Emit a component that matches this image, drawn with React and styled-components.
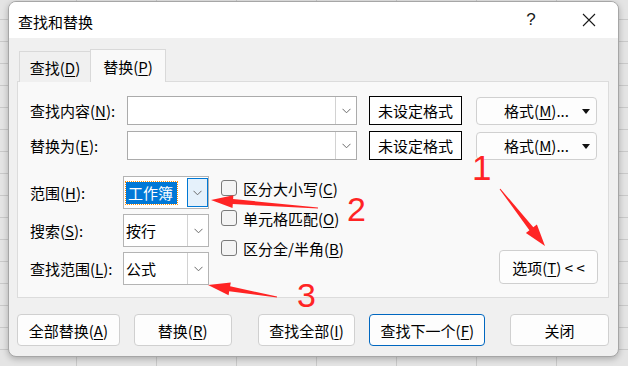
import React from "react";
import styled, { createGlobalStyle, css } from "styled-components";

const FONT = `"Noto Sans CJK SC", "Noto Sans", sans-serif`;

const GlobalStyle = createGlobalStyle`
  html, body { margin: 0; padding: 0; }
  body {
    width: 628px;
    height: 366px;
    overflow: hidden;
    font-family: ${FONT};
    background-color: #e4e4e4;
    background-image:
      repeating-linear-gradient(to bottom, transparent 0 19px, #c9c9c9 19px 20px, transparent 20px 22px),
      repeating-linear-gradient(to right, transparent 0 76px, #c9c9c9 76px 77px, transparent 77px 80px);
  }
  u { text-underline-offset: 2px; text-decoration-thickness: 1px; }
`;

const Page = styled.div`
  position: relative;
  width: 628px;
  height: 366px;
  padding: 1px 0 0 8px;
  box-sizing: border-box;
`;

const Dialog = styled.div`
  width: 611px;
  height: 356px;
  box-sizing: border-box;
  background: #f0f0f0;
  border: 1px solid #a6a6a6;
  border-radius: 8px;
  box-shadow: 0 2px 6px rgba(0, 0, 0, 0.25);
  overflow: hidden;
  display: flex;
  flex-direction: column;
  color: #000;
  font-size: 15px;
`;

const TitleBar = styled.div`
  height: 36px;
  flex: none;
  background: #ffffff;
  display: flex;
  align-items: center;
  padding-left: 9px;
`;

const Title = styled.div`
  font-size: 15px;
  line-height: 1;
  margin-top: 2px;
`;

const TitleButtons = styled.div`
  margin-left: auto;
  display: flex;
  gap: 12px;
  padding-right: 6px;
  height: 100%;
`;

const TitleButton = styled.div`
  width: 46px;
  height: 100%;
  display: flex;
  align-items: center;
  justify-content: center;
  font-family: "Liberation Sans", sans-serif;
  font-size: 17px;
  color: #1a1a1a;
`;

const Body = styled.div`
  flex: 1;
  display: flex;
  flex-direction: column;
  padding: 11px 9px 0 8px;
`;

const TabStrip = styled.div`
  height: 32px;
  display: flex;
  align-items: flex-end;
  padding-left: 2px;
`;

const Tab = styled.div`
  box-sizing: border-box;
  height: ${(p) => (p.$active ? 33 : 31)}px;
  width: ${(p) => p.$w}px;
  margin-bottom: -1px;
  border: 1px solid #d9d9d9;
  border-bottom: none;
  background: ${(p) => (p.$active ? "#f9f9f9" : "#f0f0f0")};
  display: flex;
  align-items: center;
  justify-content: center;
  font-size: 15px;
  line-height: 1;
  position: relative;
  z-index: ${(p) => (p.$active ? 1 : 0)};
  margin-left: ${(p) => (p.$active ? -1 : 0)}px;
`;

const Panel = styled.div`
  box-sizing: border-box;
  height: 217px;
  background: #f9f9f9;
  border: 1px solid #dcdcdc;
  padding: 14px 0 0 12px;
  display: flex;
  flex-direction: column;
`;

const FieldRows = styled.div`
  display: flex;
  flex-direction: column;
  gap: 6px;
`;

const FieldRow = styled.div`
  display: flex;
  align-items: center;
  height: 29px;
`;

const Label = styled.div`
  width: ${(p) => p.$w}px;
  flex: none;
  font-size: 15px;
  line-height: 1;
  white-space: nowrap;
`;

const TextCombo = styled.div`
  box-sizing: border-box;
  width: 230px;
  height: 29px;
  background: #fff;
  border: 1px solid #ababab;
  display: flex;
`;

const TextValue = styled.div`
  flex: 1;
`;

const DropPart = styled.div`
  box-sizing: border-box;
  width: ${(p) => p.$w || 21}px;
  display: flex;
  align-items: center;
  justify-content: center;
  border-left: 1px solid #d2d2d2;
  background: #fff;
  ${(p) =>
    p.$focused &&
    css`
      border: 1px solid #0078d4;
      background: #e5f1fb;
      margin: 1px 0;
    `}
`;

const FormatBox = styled.div`
  box-sizing: border-box;
  width: 93px;
  height: 29px;
  margin-left: 12px;
  border: 1px solid #000;
  background: #fff;
  display: flex;
  align-items: center;
  justify-content: center;
  font-size: 15px;
  line-height: 1;
`;

const FormatButton = styled.div`
  box-sizing: border-box;
  position: relative;
  width: 121px;
  height: 28px;
  margin-left: 14px;
  border: 1px solid #d0d0d0;
  border-radius: 4px;
  background: #fdfdfd;
  display: flex;
  align-items: center;
  justify-content: center;
  font-size: 15px;
  line-height: 1;
`;

const Caret = styled.span`
  position: absolute;
  right: 6px;
  top: 50%;
  margin-top: -2px;
  width: 0;
  height: 0;
  border-left: 4px solid transparent;
  border-right: 4px solid transparent;
  border-top: 5px solid #111;
`;

const Lower = styled.div`
  display: flex;
  margin-top: 16px;
`;

const OptionsGrid = styled.div`
  display: grid;
  grid-template-columns: 93px 86px;
  grid-auto-rows: 33px;
  row-gap: 5px;
  align-items: center;
`;

const Combo = styled.div`
  box-sizing: border-box;
  width: 86px;
  height: 33px;
  background: #fff;
  border: 1px solid #b4b4b4;
  display: flex;
`;

const ComboValue = styled.div`
  flex: 1;
  display: flex;
  align-items: center;
  padding-left: 2px;
  font-size: 15px;
  line-height: 1;
`;

const Selected = styled.span`
  display: flex;
  align-items: center;
  height: 22px;
  padding: 0 4px 0 2px;
  background: #0078d7;
  color: #fff;
  outline: 1px dotted #ff8c00;
`;

const CheckColumn = styled.div`
  display: flex;
  flex-direction: column;
  gap: 14px;
  padding-top: 4px;
  margin-left: 12px;
`;

const CheckRow = styled.div`
  display: flex;
  align-items: center;
  height: 16px;
  font-size: 15px;
  line-height: 1;
`;

const Box = styled.span`
  box-sizing: border-box;
  width: 16px;
  height: 16px;
  border: 1px solid #7a7a7a;
  border-radius: 3px;
  background: #f4f4f4;
  margin-right: 6px;
  flex: none;
`;

const OptionsButton = styled.div`
  box-sizing: border-box;
  align-self: flex-end;
  margin: 0 0 1px auto;
  margin-right: 10px;
  width: 99px;
  height: 34px;
  border: 1px solid #cfcfcf;
  border-radius: 4px;
  background: #fdfdfd;
  display: flex;
  align-items: center;
  justify-content: center;
  font-size: 15px;
  line-height: 1;
  white-space: pre;
`;

const ButtonRow = styled.div`
  display: flex;
  margin-top: 16px;
  height: 32px;
`;

const Button = styled.div`
  box-sizing: border-box;
  width: ${(p) => p.$w}px;
  margin-left: ${(p) => p.$gap || 0}px;
  height: 32px;
  border: 1px solid ${(p) => (p.$primary ? "#0067c0" : "#d0d0d0")};
  border-radius: 4px;
  background: #fdfdfd;
  display: flex;
  align-items: center;
  justify-content: center;
  font-size: 15px;
  line-height: 1;
`;

const Overlay = styled.svg`
  position: absolute;
  left: 0;
  top: 0;
  pointer-events: none;
`;

const Chevron = () => (
  <svg width="9" height="6" viewBox="0 0 9 6">
    <path d="M0.5 0.8 L4.5 4.8 L8.5 0.8" fill="none" stroke="#6b6b6b" strokeWidth="1" />
  </svg>
);

function arrowPoints(x1, y1, x2, y2, headLen, headW, w0, w1) {
  const dx = x2 - x1;
  const dy = y2 - y1;
  const L = Math.hypot(dx, dy);
  const ux = dx / L;
  const uy = dy / L;
  const nx = -uy;
  const ny = ux;
  const bx = x2 - ux * headLen;
  const by = y2 - uy * headLen;
  const pts = [
    [x1 + (nx * w0) / 2, y1 + (ny * w0) / 2],
    [bx + (nx * w1) / 2, by + (ny * w1) / 2],
    [bx + (nx * headW) / 2, by + (ny * headW) / 2],
    [x2, y2],
    [bx - (nx * headW) / 2, by - (ny * headW) / 2],
    [bx - (nx * w1) / 2, by - (ny * w1) / 2],
    [x1 - (nx * w0) / 2, y1 - (ny * w0) / 2],
  ];
  return pts.map((p) => p.map((v) => v.toFixed(1)).join(",")).join(" ");
}

const RED = "#ff2424";

export default function App() {
  return (
    <>
      <GlobalStyle />
      <Page>
        <Dialog>
          <TitleBar>
            <Title>查找和替换</Title>
            <TitleButtons>
              <TitleButton>?</TitleButton>
              <TitleButton>
                <svg width="14" height="14" viewBox="0 0 14 14">
                  <path d="M1 1 L13 13 M13 1 L1 13" stroke="#1a1a1a" strokeWidth="1.1" />
                </svg>
              </TitleButton>
            </TitleButtons>
          </TitleBar>
          <Body>
            <TabStrip>
              <Tab $w={72}>
                查找(<u>D</u>)
              </Tab>
              <Tab $w={76} $active>
                替换(<u>P</u>)
              </Tab>
            </TabStrip>
            <Panel>
              <FieldRows>
                <FieldRow>
                  <Label $w={97}>
                    查找内容(<u>N</u>):
                  </Label>
                  <TextCombo>
                    <TextValue />
                    <DropPart>
                      <Chevron />
                    </DropPart>
                  </TextCombo>
                  <FormatBox>未设定格式</FormatBox>
                  <FormatButton>
                    格式(<u>M</u>)...
                    <Caret />
                  </FormatButton>
                </FieldRow>
                <FieldRow>
                  <Label $w={97}>
                    替换为(<u>E</u>):
                  </Label>
                  <TextCombo>
                    <TextValue />
                    <DropPart>
                      <Chevron />
                    </DropPart>
                  </TextCombo>
                  <FormatBox>未设定格式</FormatBox>
                  <FormatButton>
                    格式(<u>M</u>)...
                    <Caret />
                  </FormatButton>
                </FieldRow>
              </FieldRows>
              <Lower>
                <OptionsGrid>
                  <Label $w={93}>
                    范围(<u>H</u>):
                  </Label>
                  <Combo>
                    <ComboValue>
                      <Selected>工作簿</Selected>
                    </ComboValue>
                    <DropPart $focused>
                      <Chevron />
                    </DropPart>
                  </Combo>
                  <Label $w={93}>
                    搜索(<u>S</u>):
                  </Label>
                  <Combo>
                    <ComboValue>按行</ComboValue>
                    <DropPart>
                      <Chevron />
                    </DropPart>
                  </Combo>
                  <Label $w={93}>
                    查找范围(<u>L</u>):
                  </Label>
                  <Combo>
                    <ComboValue>公式</ComboValue>
                    <DropPart>
                      <Chevron />
                    </DropPart>
                  </Combo>
                </OptionsGrid>
                <CheckColumn>
                  <CheckRow>
                    <Box />
                    区分大小写(<u>C</u>)
                  </CheckRow>
                  <CheckRow>
                    <Box />
                    单元格匹配(<u>O</u>)
                  </CheckRow>
                  <CheckRow>
                    <Box />
                    区分全/半角(<u>B</u>)
                  </CheckRow>
                </CheckColumn>
                <OptionsButton>
                  选项(<u>T</u>) {"< <"}
                </OptionsButton>
              </Lower>
            </Panel>
            <ButtonRow>
              <Button $w={103}>
                全部替换(<u>A</u>)
              </Button>
              <Button $w={98} $gap={14}>
                替换(<u>R</u>)
              </Button>
              <Button $w={98} $gap={26}>
                查找全部(<u>I</u>)
              </Button>
              <Button $w={116} $gap={14} $primary>
                查找下一个(<u>F</u>)
              </Button>
              <Button $w={99} $gap={25}>
                关闭
              </Button>
            </ButtonRow>
          </Body>
        </Dialog>
        <Overlay width="628" height="366" viewBox="0 0 628 366">
          <polygon fill={RED} points={arrowPoints(500, 189, 545, 246, 22, 14, 1, 5)} />
          <polygon fill={RED} points={arrowPoints(318, 208, 211, 200, 22, 13, 1, 5)} />
          <polygon fill={RED} points={arrowPoints(277, 297, 208, 285, 22, 13, 1, 5)} />
          <text x="472" y="180" fill={RED} fontFamily="Liberation Sans, sans-serif" fontSize="35">
            1
          </text>
          <text x="347" y="221" fill={RED} fontFamily="Liberation Sans, sans-serif" fontSize="34">
            2
          </text>
          <text x="297" y="307" fill={RED} fontFamily="Liberation Sans, sans-serif" fontSize="34">
            3
          </text>
        </Overlay>
      </Page>
    </>
  );
}
